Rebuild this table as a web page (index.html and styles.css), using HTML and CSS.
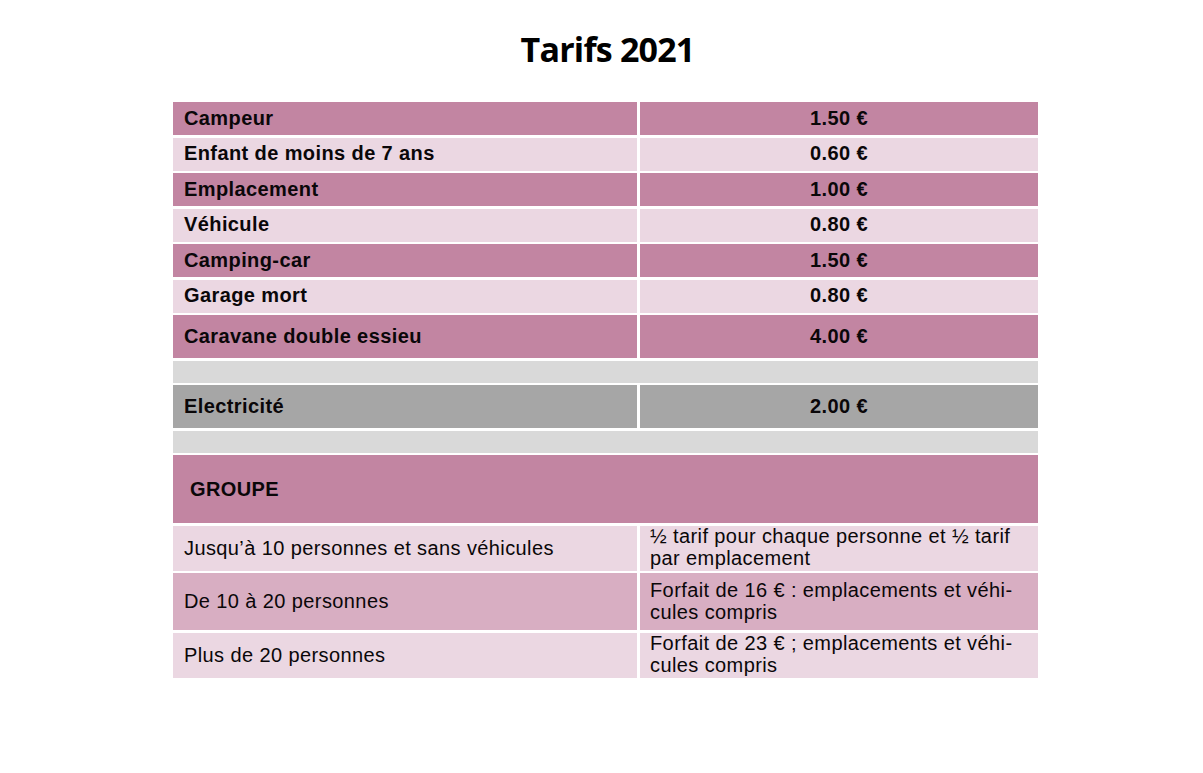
FILE: index.html
```html
<!DOCTYPE html>
<html lang="fr">
<head>
<meta charset="utf-8">
<title>Tarifs 2021</title>
<link rel="stylesheet" href="styles.css">
</head>
<body>
<main class="page">
  <h1 class="title">Tarifs 2021</h1>
  <div class="tarifs">
    <div class="cell label dark">Campeur</div>
    <div class="cell price dark">1.50 €</div>
    <div class="cell label light">Enfant de moins de 7 ans</div>
    <div class="cell price light">0.60 €</div>
    <div class="cell label dark">Emplacement</div>
    <div class="cell price dark">1.00 €</div>
    <div class="cell label light">Véhicule</div>
    <div class="cell price light">0.80 €</div>
    <div class="cell label dark">Camping-car</div>
    <div class="cell price dark">1.50 €</div>
    <div class="cell label light">Garage mort</div>
    <div class="cell price light">0.80 €</div>
    <div class="cell label dark">Caravane double essieu</div>
    <div class="cell price dark">4.00 €</div>
    <div class="cell spacer"></div>
    <div class="cell label grey">Electricité</div>
    <div class="cell price grey">2.00 €</div>
    <div class="cell spacer"></div>
    <div class="cell group-head dark">GROUPE</div>
    <div class="cell group-label light">Jusqu’à 10 personnes et sans véhicules</div>
    <div class="cell group-text light">½ tarif pour chaque personne et ½ tarif<br>par emplacement</div>
    <div class="cell group-label medium">De 10 à 20 personnes</div>
    <div class="cell group-text medium">Forfait de 16 € : emplacements et véhi-<br>cules compris</div>
    <div class="cell group-label light">Plus de 20 personnes</div>
    <div class="cell group-text light">Forfait de 23 € ; emplacements et véhi-<br>cules compris</div>
  </div>
</main>
</body>
</html>
```
FILE: styles.css
```css
html, body {
  margin: 0;
  padding: 0;
  background: #ffffff;
}

.page {
  width: 865px;
  margin-left: 173px;
  padding-top: 29px;
}

.title {
  margin: 0 0 32px 0;
  padding-left: 4px;
  font-family: "Open Sans", "Noto Sans", sans-serif;
  font-weight: 700;
  font-size: 34px;
  line-height: 41px;
  letter-spacing: -0.8px;
  text-align: center;
  color: #000000;
}

.tarifs {
  display: grid;
  grid-template-columns: 464px 398px;
  grid-template-rows: 33px 33px 33px 33px 33px 33px 43px 22px 43px 22px 68px 45px 57px 45px;
  column-gap: 3px;
  row-gap: 2.5px;
  font-family: "Liberation Sans", Arial, sans-serif;
  color: #0a0709;
}

.cell {
  display: flex;
  align-items: center;
  font-size: 20px;
  line-height: 22px;
  letter-spacing: 0.4px;
}

.label {
  padding-left: 11px;
  padding-bottom: 2px;
  font-weight: 700;
}

.price {
  justify-content: center;
  padding-bottom: 2px;
  font-weight: 700;
}

.spacer {
  grid-column: 1 / span 2;
  background: #d9d9d9;
}

.group-head {
  grid-column: 1 / span 2;
  padding-left: 17px;
  font-weight: 700;
}

.group-label {
  padding-left: 11px;
  padding-bottom: 1px;
  font-weight: 400;
}

.group-text {
  padding-left: 10px;
  padding-bottom: 2px;
  font-weight: 400;
}

.dark { background: #c285a2; }
.light { background: #ebd7e2; }
.medium { background: #d8aec2; }
.grey { background: #a6a6a6; }
```
